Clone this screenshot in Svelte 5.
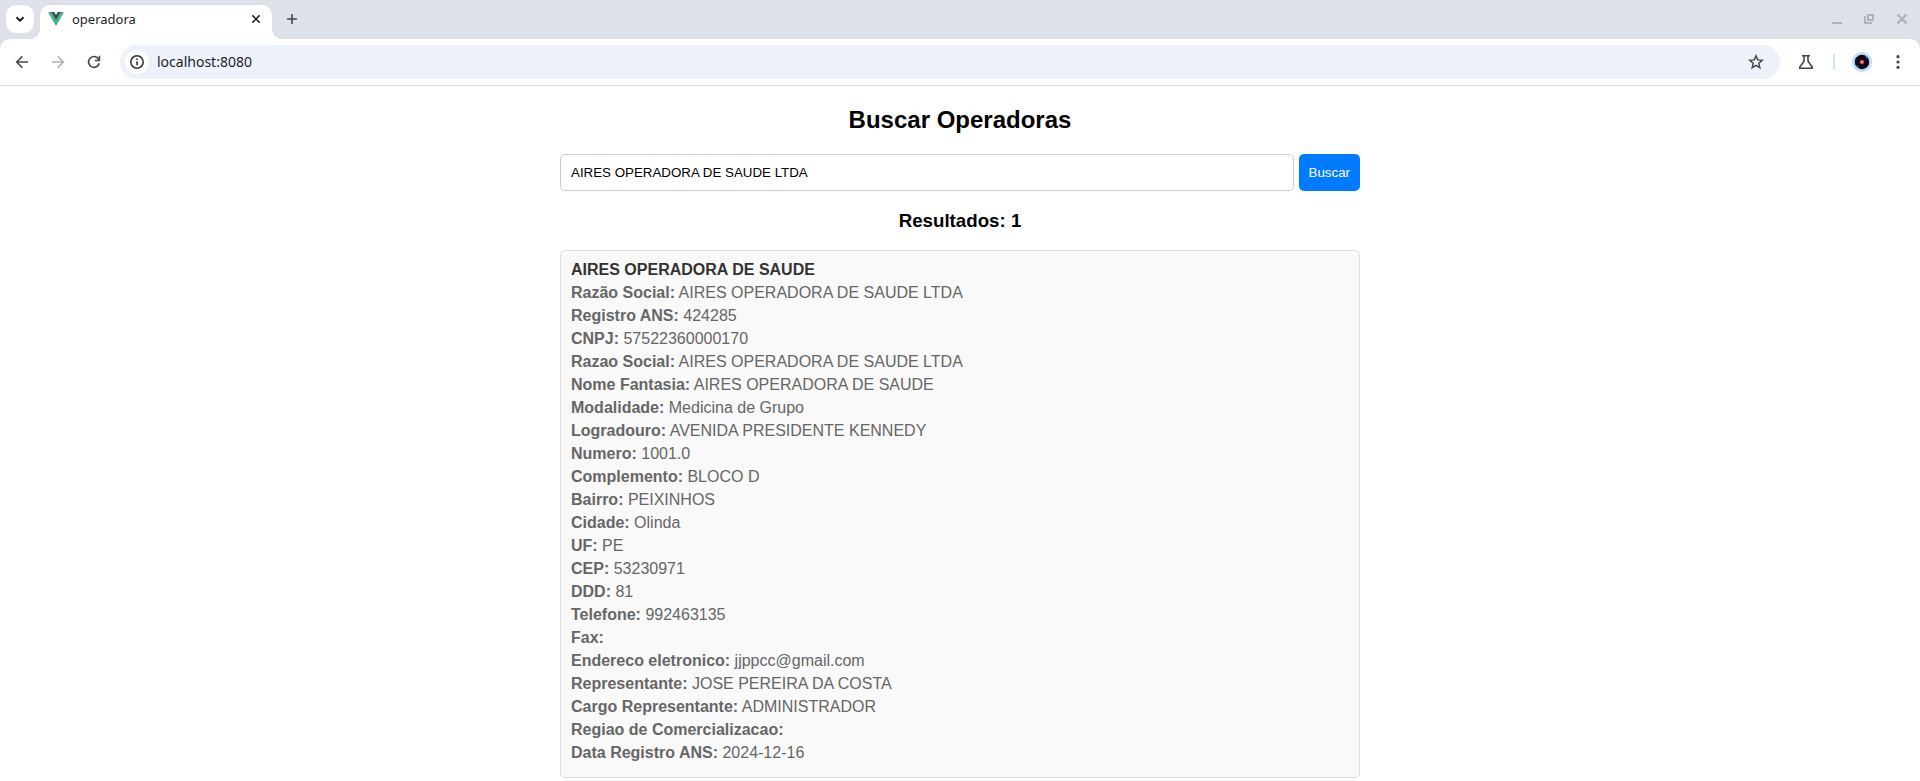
<script>
  let url = $state('localhost:8080');
  let query = $state('AIRES OPERADORA DE SAUDE LTDA');

  const results = [
    {
      name: 'AIRES OPERADORA DE SAUDE',
      fields: [
        ['Razão Social', 'AIRES OPERADORA DE SAUDE LTDA'],
        ['Registro ANS', '424285'],
        ['CNPJ', '57522360000170'],
        ['Razao Social', 'AIRES OPERADORA DE SAUDE LTDA'],
        ['Nome Fantasia', 'AIRES OPERADORA DE SAUDE'],
        ['Modalidade', 'Medicina de Grupo'],
        ['Logradouro', 'AVENIDA PRESIDENTE KENNEDY'],
        ['Numero', '1001.0'],
        ['Complemento', 'BLOCO D'],
        ['Bairro', 'PEIXINHOS'],
        ['Cidade', 'Olinda'],
        ['UF', 'PE'],
        ['CEP', '53230971'],
        ['DDD', '81'],
        ['Telefone', '992463135'],
        ['Fax', ''],
        ['Endereco eletronico', 'jjppcc@gmail.com'],
        ['Representante', 'JOSE PEREIRA DA COSTA'],
        ['Cargo Representante', 'ADMINISTRADOR'],
        ['Regiao de Comercializacao', ''],
        ['Data Registro ANS', '2024-12-16']
      ]
    }
  ];
</script>

<header class="browser">
  <div class="strip">
    <button class="tab-list" aria-label="Pesquisar guias">
      <svg width="16" height="16" viewBox="0 0 16 16"><path d="M4.5 6.2 8 9.7l3.5-3.5" fill="none" stroke="#1f1f1f" stroke-width="2" /></svg>
    </button>
    <div class="tab">
      <svg width="16" height="14" viewBox="0 0 16 14">
        <path d="M0 0h3.2L8 8.3 12.8 0H16L8 14z" fill="#41b883" />
        <path d="M3.2 0h3L8 3.1 9.8 0h3L8 8.3z" fill="#35495e" />
      </svg>
      <span class="tab-title">operadora</span>
      <button class="plain small" aria-label="Fechar guia">
        <svg width="16" height="16" viewBox="0 0 16 16"><path d="m4.4 4.4 7.2 7.2m0-7.2-7.2 7.2" fill="none" stroke="#1f1f1f" stroke-width="1.5" /></svg>
      </button>
    </div>
    <button class="plain new-tab" aria-label="Nova guia">
      <svg width="16" height="16" viewBox="0 0 16 16"><path d="M8 3v10M3 8h10" fill="none" stroke="#474747" stroke-width="1.6" /></svg>
    </button>
    <div class="window-controls">
      <button class="plain small" aria-label="Minimizar">
        <svg width="16" height="16" viewBox="0 0 16 16"><path d="M2 12h10" stroke="#b0b3ba" stroke-width="2" /></svg>
      </button>
      <button class="plain small" aria-label="Restaurar">
        <svg width="16" height="16" viewBox="0 0 16 16" fill="none" stroke="#b0b3ba" stroke-width="2"><path d="M6 4h5v5H6z" /><path d="M3 5v7h7" /></svg>
      </button>
      <button class="plain small" aria-label="Fechar">
        <svg width="16" height="16" viewBox="0 0 16 16"><path d="m3.5 3.5 9 9m0-9-9 9" stroke="#b0b3ba" stroke-width="2.4" /></svg>
      </button>
    </div>
  </div>

  <div class="toolbar">
    <button class="plain" aria-label="Voltar">
      <svg width="16" height="16" viewBox="0 0 16 16" fill="none" stroke="#474747" stroke-width="1.6"><path d="M14 8H3M8.3 2.4 2.7 8l5.6 5.6" /></svg>
    </button>
    <button class="plain" aria-label="Avançar">
      <svg width="16" height="16" viewBox="0 0 16 16" fill="none" stroke="#b0b0b0" stroke-width="1.6"><path d="M2 8h11M7.7 2.4 13.3 8l-5.6 5.6" /></svg>
    </button>
    <button class="plain" aria-label="Recarregar">
      <svg width="16" height="16" viewBox="0 0 16 16" fill="none" stroke="#474747" stroke-width="1.6"><path d="M13.2 9.2A5.4 5.4 0 1 1 12 4.4L13.4 6" /><path d="M13.4 1.8v4.7H8.8" /></svg>
    </button>
    <div class="omnibox">
      <button class="site-info" aria-label="Informações do site">
        <svg width="16" height="16" viewBox="0 0 16 16"><circle cx="8" cy="8" r="6.2" fill="none" stroke="#303030" stroke-width="1.5" /><path d="M8 7.2v4M8 4.4v1.6" stroke="#303030" stroke-width="1.6" /></svg>
      </button>
      <input class="url" type="text" aria-label="Endereço" bind:value={url} />
      <button class="plain" aria-label="Adicionar aos favoritos">
        <svg width="16" height="16" viewBox="0 0 16 16"><path d="m8 1.8 1.7 4.1 4.5.4-3.4 2.9 1 4.4L8 11.3l-3.8 2.3 1-4.4-3.4-2.9 4.5-.4z" fill="none" stroke="#474747" stroke-width="1.5" /></svg>
      </button>
    </div>
    <div class="extras">
      <button class="plain" aria-label="Experimentos">
        <svg width="16" height="16" viewBox="0 0 16 16" fill="none" stroke="#474747" stroke-width="1.6"><path d="M4 1.8h8M6 1.8v5.4L1.8 13v1.2h12.4V13L10 7.2V1.8" /></svg>
      </button>
      <span class="divider"></span>
      <button class="plain" aria-label="Perfil">
        <svg width="20" height="20" viewBox="0 0 20 20">
          <circle cx="10" cy="10" r="10" fill="#b9defb" />
          <circle cx="10" cy="10" r="7.2" fill="#0b0716" />
          <path d="M10 10 4.8 5A7 7 0 0 0 3.8 13zM10 10l5-5.3A7 7 0 0 1 16.4 8z" fill="#120f24" />
          <path d="m5 13 2 2-1 .5-1.8-1.7zM14 4.4l1.5 1.5-1 .7-1.3-1.5z" fill="#6a7284" />
          <circle cx="10" cy="10" r="2.3" fill="#e8335c" />
          <circle cx="10" cy="10" r="1.1" fill="#ffc06c" />
        </svg>
      </button>
      <button class="plain" aria-label="Menu">
        <svg width="16" height="16" viewBox="0 0 16 16" fill="#474747"><circle cx="8" cy="2.7" r="1.6" /><circle cx="8" cy="8" r="1.6" /><circle cx="8" cy="13.3" r="1.6" /></svg>
      </button>
    </div>
  </div>
</header>

<main>
  <h2>Buscar Operadoras</h2>
  <form onsubmit={(e) => e.preventDefault()}>
    <input class="query" type="text" aria-label="Buscar operadora" bind:value={query} />
    <button class="search" type="submit">Buscar</button>
  </form>
  <h3>Resultados: {results.length}</h3>
  <ul>
    {#each results as item}
      <li>
        <p class="name">{item.name}</p>
        {#each item.fields as [label, value]}
          <p><strong>{label}:</strong> {value}</p>
        {/each}
      </li>
    {/each}
  </ul>
</main>

<style>
  :global(body) {
    margin: 0;
    background: #fff;
  }
  svg {
    display: block;
    flex: none;
  }
  button {
    border: 0;
    padding: 0;
    cursor: pointer;
  }

  .browser {
    background: #dde1e9;
    font-family: 'Noto Sans', sans-serif;
    color: #1f1f1f;
  }
  .strip {
    display: flex;
    align-items: flex-start;
    height: 34px;
    padding: 5px 6px 0;
  }
  .tab-list {
    display: grid;
    place-items: center;
    width: 28px;
    height: 28px;
    margin-right: 6px;
    border-radius: 10px;
    background: #fff;
  }
  .tab {
    position: relative;
    display: flex;
    align-items: center;
    box-sizing: border-box;
    width: 232px;
    height: 34px;
    padding: 0 8px 6px;
    border-radius: 10px 10px 0 0;
    background: #fff;
  }
  .tab::before,
  .tab::after {
    content: '';
    position: absolute;
    bottom: 0;
    width: 10px;
    height: 10px;
  }
  .tab::before {
    right: 100%;
    background: radial-gradient(circle at 0 0, transparent 10px, #fff 10px);
  }
  .tab::after {
    left: 100%;
    background: radial-gradient(circle at 100% 0, transparent 10px, #fff 10px);
  }
  .tab-title {
    flex: 1;
    margin-left: 8px;
    font-size: 13px;
    line-height: 18px;
  }
  .plain {
    display: grid;
    place-items: center;
    width: 28px;
    height: 28px;
    background: none;
  }
  .small {
    width: 16px;
  }
  .new-tab {
    margin-left: 6px;
  }
  .window-controls {
    display: flex;
    gap: 16px;
    margin-left: auto;
    padding-right: 4px;
  }

  .toolbar {
    display: flex;
    align-items: center;
    gap: 8px;
    height: 46px;
    padding: 0 8px;
    border-bottom: 1px solid #dcdee2;
    border-radius: 10px 10px 0 0;
    background: #fff;
  }
  .omnibox {
    display: flex;
    flex: 1;
    align-items: center;
    box-sizing: border-box;
    height: 34px;
    margin-left: 4px;
    padding: 0 10px 0 5px;
    border-radius: 17px;
    background: #ecf1fa;
  }
  .site-info {
    display: grid;
    place-items: center;
    width: 24px;
    height: 24px;
    border-radius: 50%;
    background: #fff;
  }
  .url {
    flex: 1;
    min-width: 0;
    margin-left: 8px;
    padding: 0;
    border: 0;
    outline: 0;
    background: none;
    color: #1f1f1f;
    font: 14px/20px 'Noto Sans', sans-serif;
  }
  .extras {
    display: flex;
    align-items: center;
    gap: 8px;
    margin-left: 4px;
  }
  .divider {
    width: 2px;
    height: 16px;
    margin: 0 5px;
    background: #d3e3fd;
  }

  main {
    max-width: 800px;
    margin: 0 auto;
    padding: 20px 0 0;
    font-family: 'Liberation Sans', Arial, sans-serif;
    font-size: 16px;
    line-height: 18px;
  }
  h2,
  h3 {
    text-align: center;
    color: #000;
  }
  h2 {
    margin: 0 0 20px;
    font-size: 24px;
    line-height: 28px;
  }
  h3 {
    margin: 19px 0;
    line-height: 21px;
  }
  form {
    display: flex;
    gap: 5px;
  }
  .query,
  .search {
    box-sizing: border-box;
    height: 37px;
    padding: 0 10px;
    border-radius: 5px;
    font-family: inherit;
  }
  .query {
    flex: 1;
    min-width: 0;
    border: 1px solid #ccc;
    background: #fff;
    color: #000;
  }
  .search {
    background: #007bff;
    color: #fff;
  }
  ul {
    margin: 0;
    padding: 0;
    list-style: none;
  }
  li {
    padding: 10px;
    border: 1px solid #ddd;
    border-radius: 5px;
    background: #f9f9f9;
  }
  p {
    margin: 0 0 5px;
    color: #666;
  }
  .name {
    color: #333;
    font-weight: bold;
  }
</style>
